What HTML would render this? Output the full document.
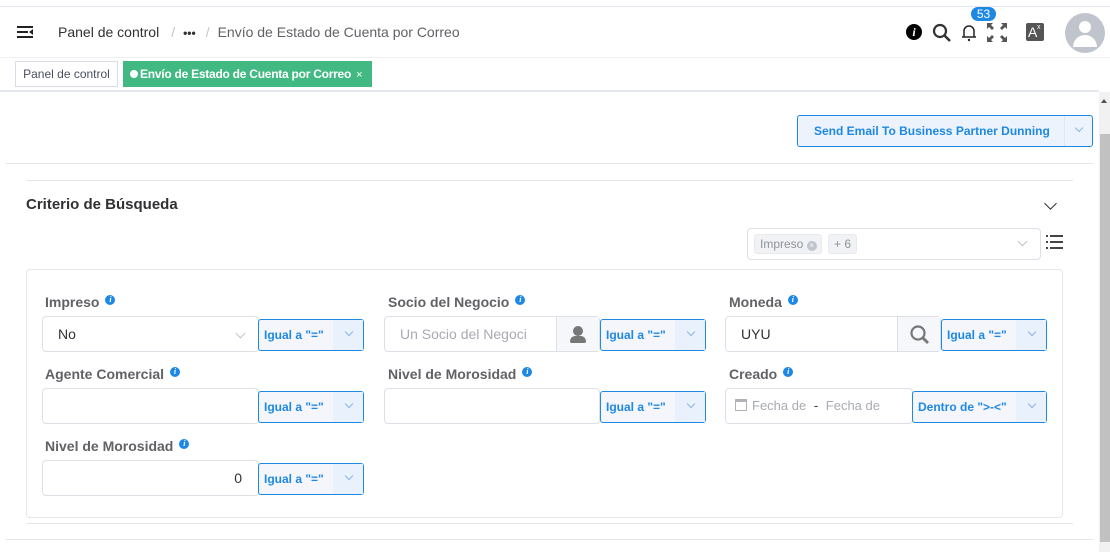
<!DOCTYPE html>
<html><head><meta charset="utf-8"><style>
*{box-sizing:border-box;margin:0;padding:0}
body{width:1110px;height:552px;overflow:hidden;background:#fff;font-family:"Liberation Sans",Arial,sans-serif;position:relative;color:#303133}
.a{position:absolute}
.lbl{position:absolute;font-size:14px;font-weight:bold;color:#606266}
.lbl i{display:inline-block;width:10px;height:10px;border-radius:50%;background:#1e88e5;color:#fff;font-size:8px;font-style:italic;text-align:center;line-height:10px;vertical-align:5px;margin-left:6px;font-family:"Liberation Serif",serif}
.inp{position:absolute;height:36px;border:1px solid #dcdfe6;border-radius:4px;background:#fff;font-size:14px;line-height:34px;padding-left:15px}
.op{position:absolute;height:32px;width:106px;border:1px solid #1e88e5;border-radius:3px;background:#f4f6fb;font-size:12px;font-weight:bold;color:#1e88e5;line-height:30px;padding-left:5px}
.op:after{content:"";position:absolute;right:0;top:0;width:30px;height:30px;background:#e8f1fc}
.op b{position:absolute;right:11px;top:9px;width:6px;height:6px;border-right:1px solid #8ab4e8;border-bottom:1px solid #8ab4e8;transform:rotate(45deg);z-index:1}
.btn{position:absolute;top:0;right:0;width:43px;height:34px;background:#f5f7fa;border-left:1px solid #dcdfe6}
</style></head><body>
<div class="a" style="left:0;top:6px;width:1110px;height:1px;background:#e4e7ed"></div>
<div class="a" style="left:17px;top:26px;width:16px;height:2px;background:#222"></div>
<div class="a" style="left:17px;top:31px;width:11px;height:2px;background:#222"></div>
<div class="a" style="left:17px;top:36px;width:16px;height:2px;background:#222"></div>
<div class="a" style="left:29px;top:29px;width:0;height:0;border:3px solid transparent;border-right:4px solid #222;border-left:0"></div>
<div class="a" style="left:58px;top:24px;font-size:14px;color:#303133;white-space:nowrap">Panel de control<span style="color:#c0c4cc;margin:0 8px 0 12px">/</span><span style="font-weight:bold;font-size:12px">•••</span><span style="color:#c0c4cc;margin:0 8px 0 10px">/</span><span style="color:#606266">Envío de Estado de Cuenta por Correo</span></div>
<div class="a" style="left:906px;top:24px;width:16px;height:16px;border-radius:50%;background:#000;color:#fff;font:italic bold 12px 'Liberation Serif',serif;text-align:center;line-height:16px">i</div>
<svg class="a" style="left:932px;top:23px" width="20" height="20"><circle cx="8" cy="8" r="6" fill="none" stroke="#333" stroke-width="2.2"/><line x1="12.5" y1="12.5" x2="18" y2="18" stroke="#333" stroke-width="2.6"/></svg>
<svg class="a" style="left:960px;top:22px" width="18" height="20"><path d="M4 15V9a5 5 0 0 1 10 0v6M2 15h14" fill="none" stroke="#222" stroke-width="1.5"/><circle cx="9" cy="18" r="1.2" fill="#222"/></svg>
<div class="a" style="left:971px;top:7px;width:25px;height:14px;border-radius:7px;background:#1e88e5;color:#fff;font-size:12px;text-align:center;line-height:14px">53</div>
<svg class="a" style="left:987px;top:23px" width="20" height="19"><g fill="#555"><path d="M0 0h6l-2 2 3 3-2 2-3-3-2 2z"/><path d="M20 0h-6l2 2-3 3 2 2 3-3 2 2z"/><path d="M0 19h6l-2-2 3-3-2-2-3 3-2-2z"/><path d="M20 19h-6l2-2-3-3 2-2 3 3 2-2z"/></g></svg>
<div class="a" style="left:1026px;top:23px;width:18px;height:18px;background:#555;border-radius:2px;color:#fff;font-size:14px;line-height:18px;padding-left:2px;overflow:hidden">A<span style="font-size:7px;position:absolute;top:-4px;left:11px">x</span></div>
<div class="a" style="left:1065px;top:13px;width:40px;height:40px;border-radius:50%;background:#c0c4cc;overflow:hidden"><div class="a" style="left:14px;top:8px;width:12px;height:12px;border-radius:50%;background:#fff"></div><div class="a" style="left:8px;top:22px;width:24px;height:12px;border-radius:12px 12px 0 0;background:#fff"></div></div>
<div class="a" style="left:0;top:57px;width:1110px;height:1px;background:#f0f0f0"></div>
<div class="a" style="left:15px;top:61px;width:103px;height:26px;border:1px solid #d8dce5;font-size:12px;line-height:24px;text-align:center;color:#495060">Panel de control</div>
<div class="a" style="left:123px;top:61px;width:249px;height:26px;background:#42b983;color:#fff;font-size:12px;font-weight:bold;line-height:26px;padding-left:7px;letter-spacing:-0.25px;white-space:nowrap"><span style="display:inline-block;width:8px;height:8px;border-radius:50%;background:#fff;margin-right:2px"></span>Envío de Estado de Cuenta por Correo <span style="font-weight:normal;font-size:11px;margin-left:2px">×</span></div>
<div class="a" style="left:0;top:90px;width:1099px;height:2px;background:#e4e7ed"></div>
<div class="a" style="left:1099px;top:92px;width:11px;height:460px;background:#f1f1f1"></div>
<div class="a" style="left:1101px;top:99px;border:3px solid transparent;border-bottom:4px solid #505050;border-top:0"></div>
<div class="a" style="left:1100px;top:134px;width:10px;height:408px;background:#c1c1c1"></div>
<div class="a" style="left:797px;top:115px;width:296px;height:32px;border:1px solid #1e88e5;border-radius:3px;background:#ecf3fd;color:#1e88e5;font-size:12px;font-weight:bold;line-height:30px;padding-left:16px">Send Email To Business Partner Dunning<div class="a" style="right:0;top:0;width:28px;height:30px;border-left:1px solid #dde8f7"></div><div class="a" style="right:10px;top:9px;width:6px;height:6px;border-right:1px solid #8ab4e8;border-bottom:1px solid #8ab4e8;transform:rotate(45deg)"></div></div>
<div class="a" style="left:6px;top:163px;width:1087px;height:1px;background:#e4e7ed"></div>
<div class="a" style="left:26px;top:180px;width:1047px;height:1px;background:#e4e7ed"></div>
<div class="a" style="left:26px;top:196px;font-size:15px;font-weight:bold;color:#303133">Criterio de Búsqueda</div>
<div class="a" style="left:1046px;top:199px;width:9px;height:9px;border-right:1.5px solid #333;border-bottom:1.5px solid #333;transform:rotate(45deg)"></div>
<div class="a" style="left:747px;top:228px;width:294px;height:32px;border:1px solid #dcdfe6;border-radius:4px">
<div class="a" style="left:6px;top:5px;width:68px;height:20px;background:#f0f2f5;border:1px solid #e9e9eb;border-radius:3px;font-size:12px;color:#909399;line-height:18px;padding-left:5px">Impreso <span style="display:inline-block;width:10px;height:10px;border-radius:50%;background:#c0c4cc;color:#fff;font-size:8px;line-height:10px;text-align:center;vertical-align:0">×</span></div>
<div class="a" style="left:80px;top:5px;width:29px;height:20px;background:#f0f2f5;border:1px solid #e9e9eb;border-radius:3px;font-size:12px;color:#909399;line-height:18px;text-align:center">+ 6</div>
<div class="a" style="right:14px;top:9px;width:7px;height:7px;border-right:1px solid #c0c4cc;border-bottom:1px solid #c0c4cc;transform:rotate(45deg)"></div></div>
<svg class="a" style="left:1046px;top:234px" width="17" height="16"><g fill="#444"><rect x="0" y="1" width="2" height="2"/><rect x="4" y="1" width="13" height="2"/><rect x="0" y="7" width="2" height="2"/><rect x="4" y="7" width="13" height="2"/><rect x="0" y="13" width="2" height="2"/><rect x="4" y="13" width="13" height="2"/></g></svg>
<div class="a" style="left:26px;top:269px;width:1037px;height:249px;border:1px solid #e4e7ed;border-radius:4px"></div>
<div class="lbl" style="left:45px;top:294px">Impreso<i>i</i></div>
<div class="inp" style="left:42px;top:316px;width:217px">No<div class="a" style="right:14px;top:13px;width:7px;height:7px;border-right:1px solid #c0c4cc;border-bottom:1px solid #c0c4cc;transform:rotate(45deg)"></div></div>
<div class="op" style="left:258px;top:319px">Igual a "="<b></b></div>
<div class="lbl" style="left:388px;top:294px">Socio del Negocio<i>i</i></div>
<div class="inp" style="left:384px;top:316px;width:216px;color:#a8abb2">Un Socio del Negoci<div class="btn"><div class="a" style="left:16px;top:9px;width:10px;height:10px;border-radius:50%;background:#777"></div><div class="a" style="left:13px;top:19px;width:16px;height:7px;border-radius:6px 6px 2px 2px;background:#777"></div></div></div>
<div class="op" style="left:600px;top:319px">Igual a "="<b></b></div>
<div class="lbl" style="left:729px;top:294px">Moneda<i>i</i></div>
<div class="inp" style="left:725px;top:316px;width:216px">UYU<div class="btn"><svg class="a" style="left:11px;top:7px" width="22" height="22"><circle cx="9" cy="9" r="6.5" fill="none" stroke="#777" stroke-width="2.2"/><line x1="13.5" y1="13.5" x2="19" y2="19" stroke="#777" stroke-width="2.8"/></svg></div></div>
<div class="op" style="left:941px;top:319px">Igual a "="<b></b></div>
<div class="lbl" style="left:45px;top:366px">Agente Comercial<i>i</i></div>
<div class="inp" style="left:42px;top:388px;width:217px"></div>
<div class="op" style="left:258px;top:391px">Igual a "="<b></b></div>
<div class="lbl" style="left:388px;top:366px">Nivel de Morosidad<i>i</i></div>
<div class="inp" style="left:384px;top:388px;width:216px"></div>
<div class="op" style="left:600px;top:391px">Igual a "="<b></b></div>
<div class="lbl" style="left:729px;top:366px">Creado<i>i</i></div>
<div class="inp" style="left:725px;top:388px;width:188px;padding-left:9px;color:#a8abb2;font-size:13px"><span style="display:inline-block;width:12px;height:12px;border:1px solid #b0b3b8;border-top-width:3px;vertical-align:-1px;margin-right:5px"></span>Fecha de <span style="color:#333;margin:0 4px">-</span> Fecha de</div>
<div class="op" style="left:912px;top:391px;width:135px">Dentro de "&gt;-&lt;"<b></b></div>
<div class="lbl" style="left:45px;top:438px">Nivel de Morosidad<i>i</i></div>
<div class="inp" style="left:42px;top:460px;width:217px;text-align:right;padding-right:16px">0</div>
<div class="op" style="left:258px;top:463px">Igual a "="<b></b></div>
<div class="a" style="left:26px;top:523px;width:1047px;height:1px;background:#e4e7ed"></div>
<div class="a" style="left:6px;top:539px;width:1087px;height:1px;background:#e4e7ed"></div>
</body></html>
